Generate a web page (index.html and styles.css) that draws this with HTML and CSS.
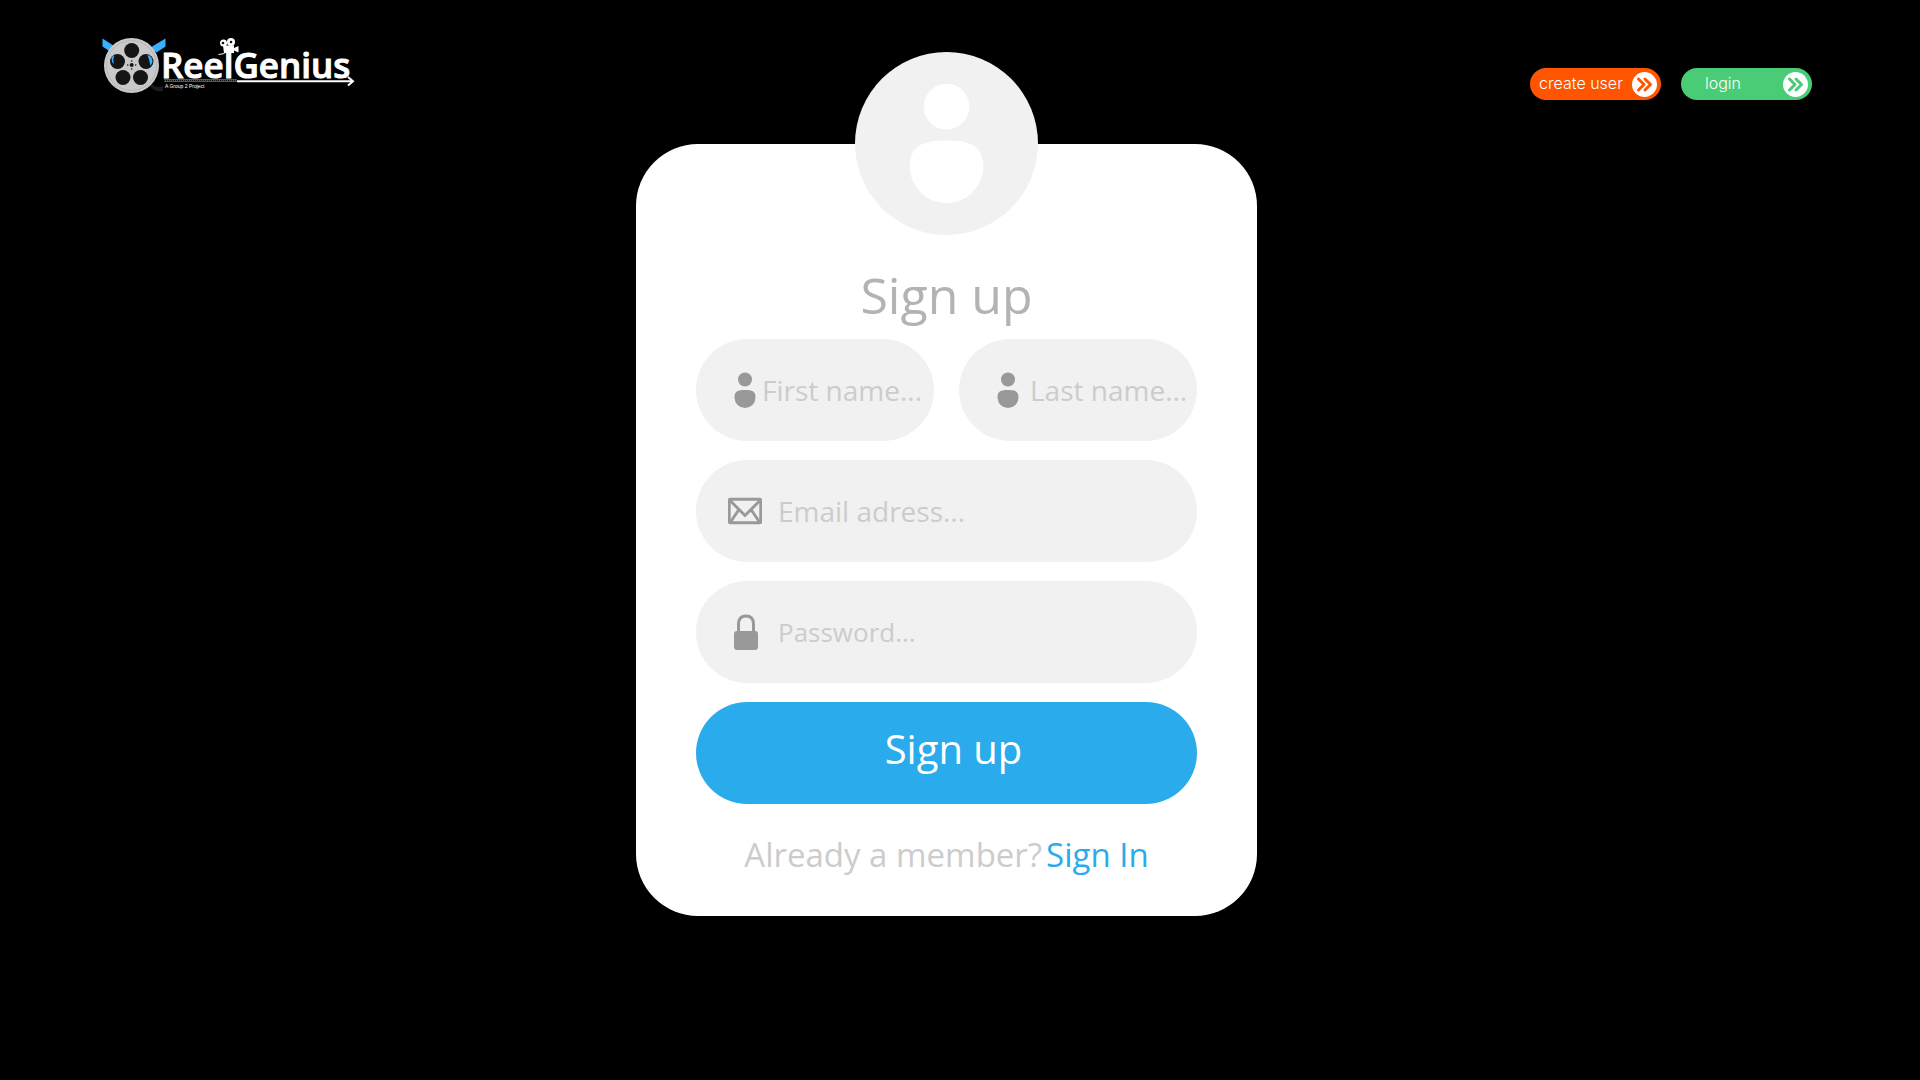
FILE: index.html
```html
<!DOCTYPE html>
<html lang="en">
<head>
<meta charset="utf-8">
<meta name="viewport" content="width=device-width, initial-scale=1">
<title>ReelGenius – Sign up</title>
<link rel="stylesheet" href="styles.css">
</head>
<body>
<div class="page">
  <header class="brand">
    <a href="#" aria-label="ReelGenius home">
      <svg class="logo" viewBox="-9 0 289 80" width="289" height="80">
        <!-- film strip ends behind the reel -->
        <path d="M12.500 13.500v8l9 6 5-5zM75.500 13.500v8l-9 6-6-5z" fill="#38b0ff"/>
        <path d="M62 59q4 5 11 2v5q-8 2-13-5z" fill="#1b1b1b"/>
        <circle cx="41.500" cy="40.500" r="27.500" fill="#c9c9cb"/>
        <circle cx="41.500" cy="40.500" r="25" fill="none" stroke="#b6b6b8"/>
        <g fill="#151515">
          <circle cx="41.700" cy="25.500" r="7.500"/>
          <circle cx="27.500" cy="36.500" r="7.500"/>
          <circle cx="56" cy="36.500" r="7.500"/>
          <circle cx="33" cy="52.500" r="7.500"/>
          <circle cx="50.500" cy="52.500" r="7.500"/>
          <circle cx="41.700" cy="40" r="2"/>
          <circle cx="41.700" cy="36" r=".8"/><circle cx="41.700" cy="44" r=".8"/>
          <circle cx="37.700" cy="40" r=".8"/><circle cx="45.700" cy="40" r=".8"/>
        </g>
        <path d="M21.500 32l3-1.500q-2 4-.5 8.500l-2-2zM57.500 30q5 1 5 7l-2 4q-1-6-3-11z" fill="#38b0ff"/>
        <text class="logo-name" x="71" y="53">ReelGenius</text>
        <!-- film camera standing on the l -->
        <path d="M133 20.500h11v2.500l4.500-2v6.500l-4.500-2v2.500h-10z" fill="#fff"/>
        <circle cx="133.500" cy="18" r="3.500" fill="#fff"/>
        <circle cx="141" cy="17" r="4" fill="#fff"/>
        <circle cx="133" cy="18" r="1.300" fill="#111"/>
        <circle cx="141" cy="17" r="1.300" fill="#111"/>
        <path d="M128.500 29.500l6-1" stroke="#fff" fill="none"/>
        <path d="M74 55.500h73" stroke="#555" stroke-width="3"/>
        <path d="M74 55.500h73" stroke="#111" stroke-width="1" stroke-dasharray="1 1"/>
        <path d="M147 56.300h116" stroke="#fff" stroke-width="2"/>
        <path d="M258 52l5 4.300-5 4.300" stroke="#fff" stroke-width="2" fill="none"/>
        <text class="logo-tag" x="75" y="63">A Group 2 Project</text>
      </svg>
    </a>
  </header>

  <main class="card">
    <svg class="avatar" viewBox="0 0 184 184" aria-hidden="true">
      <circle cx="92" cy="92" r="92" fill="#f1f1f1"/>
      <circle cx="92" cy="55" r="23" fill="#fff"/>
      <path d="M92 89C112 89 129 92 129 115A37 37 0 0 1 55 115C55 92 72 89 92 89Z" fill="#fff"/>
    </svg>
    <h1 class="title">Sign up</h1>
    <form class="form">
      <div class="names">
        <label class="field field-first">
          <svg class="icon" viewBox="0 0 34 36" aria-hidden="true"><circle cx="17" cy="7.500" r="7"/><path d="M17 18C24 18 27.500 19 27.500 25.500A10.500 10.500 0 0 1 6.500 25.500C6.500 19 10 18 17 18Z"/></svg>
          <input type="text" aria-label="First name" placeholder="First name...">
        </label>
        <label class="field field-last">
          <svg class="icon" viewBox="0 0 34 36" aria-hidden="true"><circle cx="17" cy="7.500" r="7"/><path d="M17 18C24 18 27.500 19 27.500 25.500A10.500 10.500 0 0 1 6.500 25.500C6.500 19 10 18 17 18Z"/></svg>
          <input type="text" aria-label="Last name" placeholder="Last name...">
        </label>
      </div>
      <label class="field">
        <svg class="icon icon-line" viewBox="0 0 34 36" aria-hidden="true"><rect x="1.200" y="6.200" width="31.600" height="23.600" rx="1.500"/><path d="M2 7.500L17 22.500 32 7.500M2.500 29L11 16.500M31.500 29L23 16.500"/></svg>
        <input type="email" aria-label="Email address" placeholder="Email adress...">
      </label>
      <label class="field">
        <svg class="icon" viewBox="0 0 34 36" aria-hidden="true"><rect x="6" y="17" width="24" height="19" rx="3"/><path class="shackle" d="M10.500 18V10Q10.500 2 18 2T25.500 10V18"/></svg>
        <input class="password" type="password" aria-label="Password" placeholder="Password...">
      </label>
      <button class="submit" type="submit">Sign up</button>
    </form>
    <p class="member">Already a member?<a href="#">Sign In</a></p>
  </main>

  <nav class="actions">
    <button class="pill pill-create" type="button"><span>create user</span>
      <svg viewBox="0 0 25 25" aria-hidden="true"><circle cx="12.500" cy="12.500" r="12.500"/><path d="M6.500 7L12 12.500 6.500 18M13 7L18.500 12.500 13 18"/></svg>
    </button>
    <button class="pill pill-login" type="button"><span>login</span>
      <svg viewBox="0 0 25 25" aria-hidden="true"><circle cx="12.500" cy="12.500" r="12.500"/><path d="M6.500 7L12 12.500 6.500 18M13 7L18.500 12.500 13 18"/></svg>
    </button>
  </nav>
</div>
</body>
</html>
```
FILE: styles.css
```css
* { box-sizing: border-box; }

body {
  margin: 0;
  min-height: 100vh;
  background: #000;
  font-family: "Open Sans", "Noto Sans", sans-serif;
}

.page {
  display: grid;
  grid-template-columns: 1fr minmax(0, 621px) 1fr;
  align-items: start;
  padding: 0 108px 40px 81px;
}

.brand { padding-top: 25px; }
.brand a { display: block; }
.logo { display: block; }
.logo-name { font-size: 35px; font-weight: 600; fill: #fff; stroke: #fff; stroke-width: 1px; }
.logo-tag { font-family: "Liberation Sans", sans-serif; font-size: 5px; fill: #fff; }

.card {
  display: flex;
  flex-direction: column;
  align-items: center;
  margin-top: 144px;
  padding: 0 60px 37px;
  background: #fff;
  border-radius: 62px;
}

.avatar {
  width: 183px;
  height: 183px;
  margin-top: -92px;
}

.title {
  margin: 26px 0 10px;
  font-size: 50px;
  line-height: 68px;
  font-weight: 400;
  color: #b3b3b3;
}

.form {
  display: flex;
  flex-direction: column;
  gap: 19px;
  width: 100%;
}

.names {
  display: grid;
  grid-template-columns: repeat(2, minmax(0, 1fr));
  gap: 25px;
}

.field {
  display: flex;
  align-items: center;
  gap: 16px;
  height: 102px;
  padding-left: 32px;
  background: #f1f1f1;
  border-radius: 51px;
}
.field-first { gap: 0; }
.field-last { gap: 5px; }

.icon {
  flex: none;
  width: 34px;
  height: 36px;
  fill: #999;
}
.icon-line, .shackle {
  fill: none;
  stroke: #999;
  stroke-width: 3;
}

.field input {
  flex: 1;
  min-width: 0;
  padding: 0;
  border: 0;
  outline: 0;
  background: none;
  font: inherit;
  font-size: 28px;
  color: #666;
}
.field .password { font-size: 26px; }
.field input::placeholder { color: #ccc; opacity: 1; }

.submit {
  height: 102px;
  padding: 0 0 10px 14px;
  border: 0;
  border-radius: 51px;
  background: #29abec;
  color: #fff;
  font: inherit;
  font-size: 40px;
  cursor: pointer;
}

.member {
  display: flex;
  gap: 4px;
  margin: 27px 0 0;
  font-size: 33px;
  line-height: 48px;
  color: #ccc;
  white-space: nowrap;
}
.member a { color: #29abec; text-decoration: none; }

.actions {
  display: flex;
  justify-content: flex-end;
  gap: 20px;
  padding-top: 68px;
}

.pill {
  display: flex;
  align-items: center;
  width: 131px;
  height: 32px;
  padding: 0 4px 2px 8px;
  border: 0;
  border-radius: 16px;
  color: #fff;
  font-family: Inter, "Open Sans", sans-serif;
  font-size: 16px;
  font-weight: 300;
  white-space: nowrap;
  cursor: pointer;
}
.pill span { flex: 1; padding-right: 8px; text-align: center; }
.pill svg { flex: none; width: 25px; height: 25px; margin-top: 2px; fill: #fff; }
.pill path {
  fill: none;
  stroke-width: 3;
  stroke-linecap: round;
  stroke-linejoin: round;
}
.pill-create { background: #ff5500; }
.pill-create path { stroke: #ff5500; }
.pill-login { background: #49cc75; }
.pill-login span { padding-right: 26px; }
.pill-login path { stroke: #49cc75; }
```
